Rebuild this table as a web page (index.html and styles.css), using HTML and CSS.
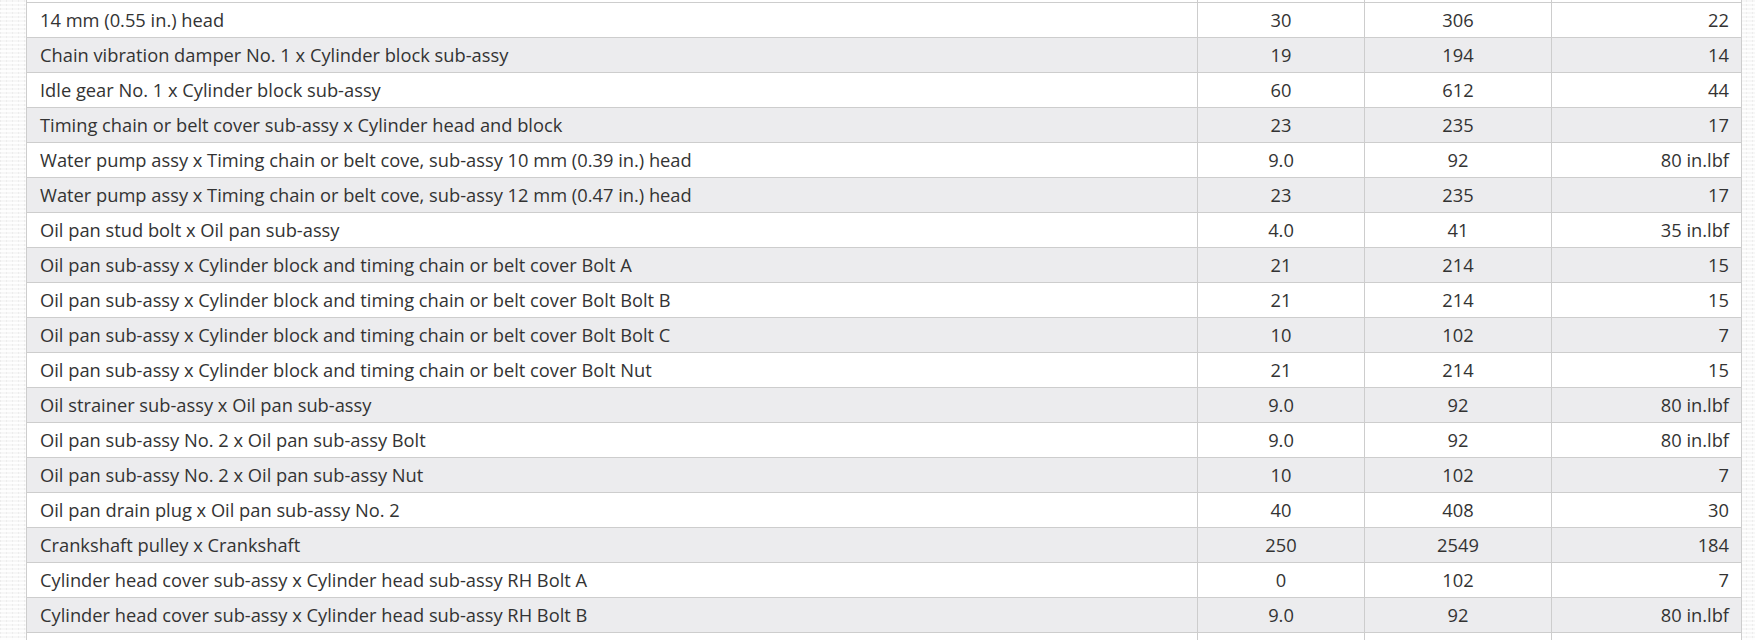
FILE: index.html
```html
<!DOCTYPE html>
<html>
<head>
<meta charset="utf-8">
<link rel="stylesheet" href="styles.css">
</head>
<body>
<div class="page">
<table class="torque">
<colgroup>
<col class="c-part"><col class="c-nm"><col class="c-kgf"><col class="c-ftlbf">
</colgroup>
<tbody>
<tr class="w edge"><td></td><td></td><td></td><td></td></tr>
<tr class="w"><td>14 mm (0.55 in.) head</td><td class="ctr">30</td><td class="ctr">306</td><td class="rt">22</td></tr>
<tr class="g"><td>Chain vibration damper No. 1 x Cylinder block sub-assy</td><td class="ctr">19</td><td class="ctr">194</td><td class="rt">14</td></tr>
<tr class="w"><td>Idle gear No. 1 x Cylinder block sub-assy</td><td class="ctr">60</td><td class="ctr">612</td><td class="rt">44</td></tr>
<tr class="g"><td>Timing chain or belt cover sub-assy x Cylinder head and block</td><td class="ctr">23</td><td class="ctr">235</td><td class="rt">17</td></tr>
<tr class="w"><td>Water pump assy x Timing chain or belt cove, sub-assy 10 mm (0.39 in.) head</td><td class="ctr">9.0</td><td class="ctr">92</td><td class="rt">80 in.lbf</td></tr>
<tr class="g"><td>Water pump assy x Timing chain or belt cove, sub-assy 12 mm (0.47 in.) head</td><td class="ctr">23</td><td class="ctr">235</td><td class="rt">17</td></tr>
<tr class="w"><td>Oil pan stud bolt x Oil pan sub-assy</td><td class="ctr">4.0</td><td class="ctr">41</td><td class="rt">35 in.lbf</td></tr>
<tr class="g"><td>Oil pan sub-assy x Cylinder block and timing chain or belt cover Bolt A</td><td class="ctr">21</td><td class="ctr">214</td><td class="rt">15</td></tr>
<tr class="w"><td>Oil pan sub-assy x Cylinder block and timing chain or belt cover Bolt Bolt B</td><td class="ctr">21</td><td class="ctr">214</td><td class="rt">15</td></tr>
<tr class="g"><td>Oil pan sub-assy x Cylinder block and timing chain or belt cover Bolt Bolt C</td><td class="ctr">10</td><td class="ctr">102</td><td class="rt">7</td></tr>
<tr class="w"><td>Oil pan sub-assy x Cylinder block and timing chain or belt cover Bolt Nut</td><td class="ctr">21</td><td class="ctr">214</td><td class="rt">15</td></tr>
<tr class="g"><td>Oil strainer sub-assy x Oil pan sub-assy</td><td class="ctr">9.0</td><td class="ctr">92</td><td class="rt">80 in.lbf</td></tr>
<tr class="w"><td>Oil pan sub-assy No. 2 x Oil pan sub-assy Bolt</td><td class="ctr">9.0</td><td class="ctr">92</td><td class="rt">80 in.lbf</td></tr>
<tr class="g"><td>Oil pan sub-assy No. 2 x Oil pan sub-assy Nut</td><td class="ctr">10</td><td class="ctr">102</td><td class="rt">7</td></tr>
<tr class="w"><td>Oil pan drain plug x Oil pan sub-assy No. 2</td><td class="ctr">40</td><td class="ctr">408</td><td class="rt">30</td></tr>
<tr class="g"><td>Crankshaft pulley x Crankshaft</td><td class="ctr">250</td><td class="ctr">2549</td><td class="rt">184</td></tr>
<tr class="w"><td>Cylinder head cover sub-assy x Cylinder head sub-assy RH Bolt A</td><td class="ctr">0</td><td class="ctr">102</td><td class="rt">7</td></tr>
<tr class="g"><td>Cylinder head cover sub-assy x Cylinder head sub-assy RH Bolt B</td><td class="ctr">9.0</td><td class="ctr">92</td><td class="rt">80 in.lbf</td></tr>
<tr class="w edge"><td></td><td></td><td></td><td></td></tr>
</tbody>
</table>
</div>
</body>
</html>
```

FILE: styles.css
```css
html, body {
  margin: 0;
  padding: 0;
}
body {
  height: 640px;
  overflow: hidden;
  background-color: #f7f7f7;
  background-image:
    repeating-linear-gradient(0deg, rgba(255,255,255,0.9) 0 2px, transparent 2px 4px),
    repeating-linear-gradient(90deg, rgba(230,230,230,0.6) 0 1px, transparent 1px 6px);
  font-family: "Open Sans", "Liberation Sans", sans-serif;
}
.page {
  padding-left: 26px;
  width: 1715px;
  margin-top: -33px;
}
.torque {
  border-collapse: collapse;
  width: 1715px;
  table-layout: fixed;
  font-size: 18.3px;
  color: #333;
}
.c-part { width: 1171px; }
.c-nm { width: 167px; }
.c-kgf { width: 187px; }
.c-ftlbf { width: 190px; }
.torque td {
  border: 1px solid #cdcdcd;
  height: 35px;
  padding: 0 12px 0 13px;
  box-sizing: border-box;
  white-space: nowrap;
  line-height: 22px;
}
.torque tr.w td { background: #ffffff; }
.torque tr.g td { background: #ececee; }
.torque td.ctr { text-align: center; padding: 0; }
.torque td.rt { text-align: right; padding-right: 12px; }
```
